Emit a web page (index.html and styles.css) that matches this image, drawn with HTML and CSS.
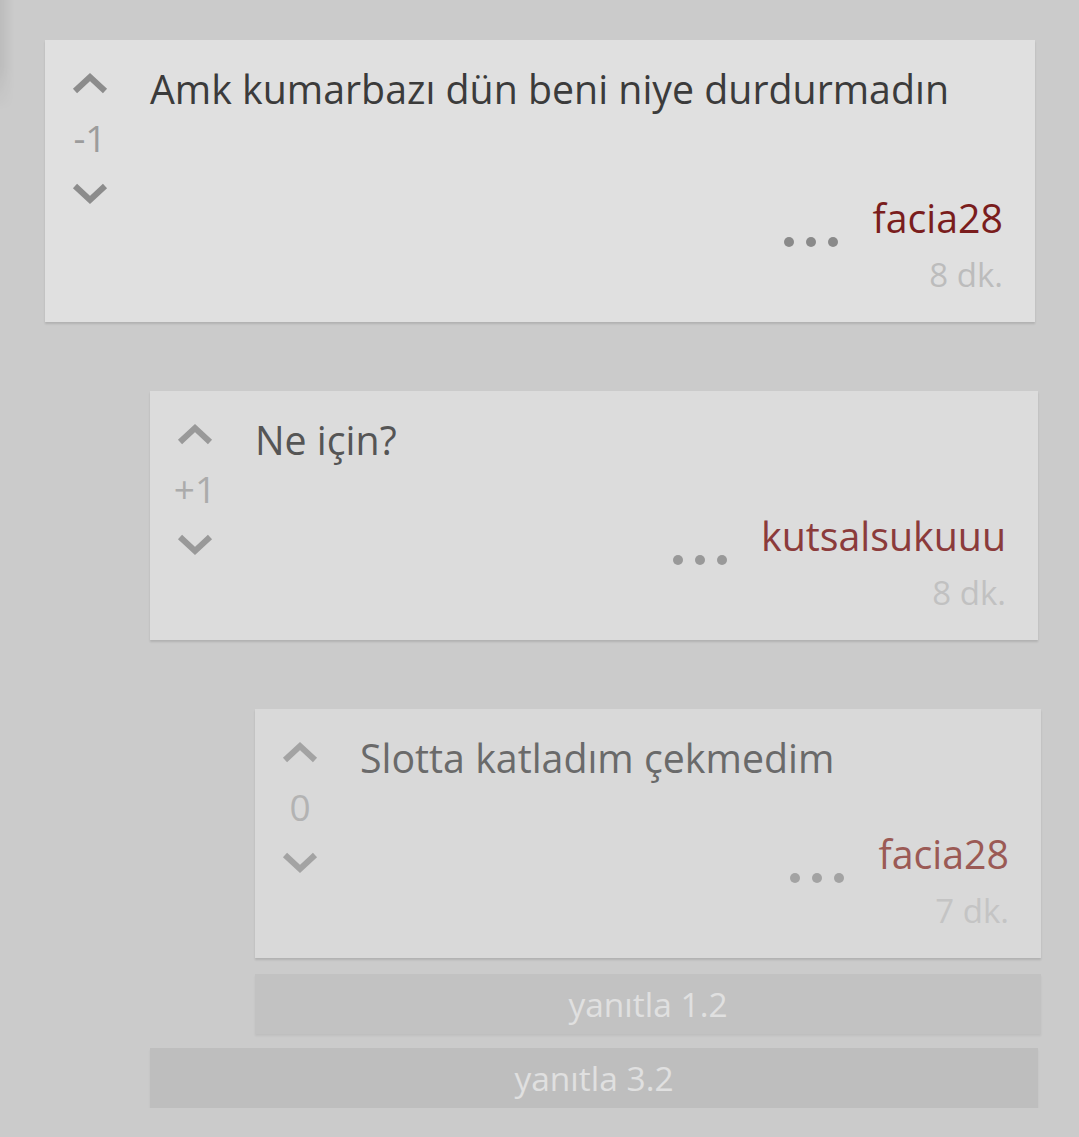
FILE: index.html
```html
<!DOCTYPE html>
<html lang="tr">
<head>
  <meta charset="UTF-8">
  <meta name="viewport" content="width=device-width, initial-scale=1.0">
  <title>Yorumlar</title>
  <link rel="stylesheet" href="styles.css">
</head>
<body>

  <!-- scroll edge glow -->
  <div class="edge-glow"></div>

  <div class="thread">

    <!-- Comment 1 -->
    <div class="comment level-1 tall">
      <div class="vote">
        <svg class="chev" viewBox="0 0 36 22"><polyline points="3,19 18,5 33,19"/></svg>
        <div class="score">-1</div>
        <svg class="chev" viewBox="0 0 36 22"><polyline points="3,3 18,17 33,3"/></svg>
      </div>
      <div class="body">
        <p class="text">Amk kumarbazı dün beni niye durdurmadın</p>
        <div class="meta">
          <div class="author">
            <span class="dots"><i></i><i></i><i></i></span>
            <span class="user">facia28</span>
          </div>
          <div class="time">8 dk.</div>
        </div>
      </div>
    </div>

    <div class="replies">

      <!-- Comment 1.1 -->
      <div class="comment level-2">
        <div class="vote">
          <svg class="chev" viewBox="0 0 36 22"><polyline points="3,19 18,5 33,19"/></svg>
          <div class="score">+1</div>
          <svg class="chev" viewBox="0 0 36 22"><polyline points="3,3 18,17 33,3"/></svg>
        </div>
        <div class="body">
          <p class="text">Ne için?</p>
          <div class="meta">
            <div class="author">
              <span class="dots"><i></i><i></i><i></i></span>
              <span class="user">kutsalsukuuu</span>
            </div>
            <div class="time">8 dk.</div>
          </div>
        </div>
      </div>

      <div class="replies">

        <!-- Comment 1.1.1 -->
        <div class="comment level-3">
          <div class="vote">
            <svg class="chev" viewBox="0 0 36 22"><polyline points="3,19 18,5 33,19"/></svg>
            <div class="score">0</div>
            <svg class="chev" viewBox="0 0 36 22"><polyline points="3,3 18,17 33,3"/></svg>
          </div>
          <div class="body">
            <p class="text">Slotta katladım çekmedim</p>
            <div class="meta">
              <div class="author">
                <span class="dots"><i></i><i></i><i></i></span>
                <span class="user">facia28</span>
              </div>
              <div class="time">7 dk.</div>
            </div>
          </div>
        </div>

        <button class="reply reply-inner">yanıtla 1.2</button>
      </div>

      <button class="reply reply-outer">yanıtla 3.2</button>
    </div>

  </div>

</body>
</html>
```

FILE: styles.css
```css
body {
  margin: 0;
  padding: 0;
  background: #cbcbcb;
  font-family: 'Open Sans', 'Noto Sans', sans-serif;
  overflow: hidden;
}
.edge-glow {
  position: absolute;
  left: 0;
  top: 0;
  width: 14px;
  height: 110px;
  background: linear-gradient(to right, rgba(0,0,0,0.07), rgba(0,0,0,0));
  -webkit-mask-image: linear-gradient(to bottom, #000 60%, transparent);
}
.thread {
  padding: 40px 44px 0 45px;
}
.replies {
  margin: 0 -3px 0 105px;
}
.comment {
  display: flex;
  background: #e0e0e0;
  box-shadow: 0 2px 2px rgba(0, 0, 0, 0.13);
  margin-bottom: 69px;
}
.vote {
  width: 90px;
  flex-shrink: 0;
  display: flex;
  flex-direction: column;
  align-items: center;
  padding-top: 32px;
}
.chev {
  width: 36px;
  height: 22px;
  display: block;
}
.chev polyline {
  fill: none;
  stroke: #8c8c8c;
  stroke-width: 6;
}
.score {
  font-size: 37px;
  line-height: 50px;
  margin: 19px 0 20px;
  color: #9c9c9c;
}
.body {
  flex: 1;
  padding: 23px 32px 25px 15px;
}
.text {
  margin: 0;
  font-size: 39.3px;
  line-height: 52px;
  color: #3b3b3b;
}
.meta {
  margin-top: 44px;
  display: flex;
  flex-direction: column;
  align-items: flex-end;
}
.tall .meta {
  margin-top: 77px;
}
.author {
  display: flex;
  align-items: flex-end;
}
.dots {
  display: flex;
  gap: 12px;
  margin: 0 34px -3px 0;
}
.dots i {
  width: 10px;
  height: 10px;
  border-radius: 50%;
  background: #8a8a8a;
}
.user {
  font-size: 39.3px;
  line-height: 52px;
  color: #7a1d1d;
}
.time {
  margin-top: 8px;
  font-size: 33px;
  line-height: 45px;
  color: #bcbcbc;
}

/* nested levels fade out */
.level-2 {
  background: #dcdcdc;
}
.level-2 .text { color: #555555; }
.level-2 .user { color: #8b3b3b; }
.level-2 .chev polyline { stroke: #999999; }
.level-2 .score { color: #ababab; }
.level-2 .dots i { background: #999999; }
.level-2 .time { color: #c1c1c1; }

.level-3 {
  background: #d9d9d9;
  margin-bottom: 16px;
}
.level-3 .text { color: #6a6a6a; }
.level-3 .user { color: #9b5a55; }
.level-3 .chev polyline { stroke: #a3a3a3; }
.level-3 .score { color: #b3b3b3; }
.level-3 .dots i { background: #a3a3a3; }
.level-3 .time { color: #c4c4c4; }

.reply {
  display: block;
  width: 100%;
  height: 60px;
  border: none;
  padding: 0;
  font-family: 'Open Sans', 'Noto Sans', sans-serif;
  font-size: 33.5px;
  color: #e0e0e0;
  box-shadow: 0 2px 2px rgba(0, 0, 0, 0.06);
}
.reply-inner {
  background: #c2c2c2;
  margin-bottom: 14px;
}
.reply-outer {
  background: #bebebe;
}
```
